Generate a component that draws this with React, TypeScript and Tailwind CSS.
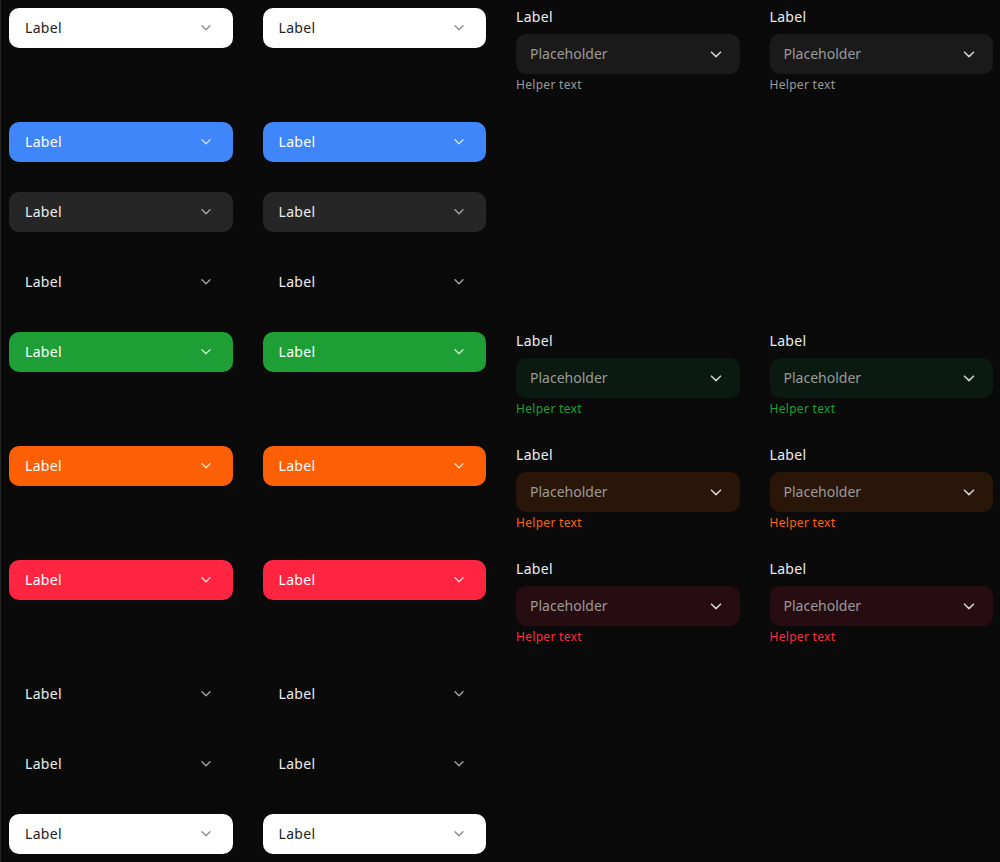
import React from "react";

type BtnVariant = "white" | "blue" | "gray" | "ghost" | "green" | "orange" | "red";
type FieldVariant = "default" | "green" | "orange" | "red";

const btnStyles: Record<BtnVariant, { box: string; text: string; icon: string }> = {
  white: { box: "bg-white", text: "text-[#222222]", icon: "#8a8a8a" },
  blue: { box: "bg-[#4086fb]", text: "text-white", icon: "#d2e2ff" },
  gray: { box: "bg-[#262626]", text: "text-[#ededed]", icon: "#a8a8a8" },
  ghost: { box: "bg-transparent", text: "text-[#ededed]", icon: "#a8a8a8" },
  green: { box: "bg-[#1d9f35]", text: "text-white", icon: "#cfeed5" },
  orange: { box: "bg-[#fc5f06]", text: "text-white", icon: "#ffe0cc" },
  red: { box: "bg-[#ff2540]", text: "text-white", icon: "#ffd6dc" },
};

const fieldStyles: Record<FieldVariant, { box: string; helper: string }> = {
  default: { box: "bg-[#1a1a1a]", helper: "text-[#9a9a9a]" },
  green: { box: "bg-[#0b1a10]", helper: "text-[#1f9f36]" },
  orange: { box: "bg-[#2a1509]", helper: "text-[#ff6207]" },
  red: { box: "bg-[#270d11]", helper: "text-[#ff2a42]" },
};

function SmallChevron({ color }: { color: string }) {
  return (
    <svg width="10" height="6" viewBox="0 0 10 6" fill="none">
      <polyline points="1,0.8 5,4.8 9,0.8" stroke={color} strokeWidth="1.3" strokeLinecap="round" strokeLinejoin="round" />
    </svg>
  );
}

function FieldChevron() {
  return (
    <svg width="12" height="7" viewBox="0 0 12 7" fill="none">
      <polyline points="1.5,1.2 6,5.6 10.5,1.2" stroke="#cfcfcf" strokeWidth="1.6" strokeLinecap="round" strokeLinejoin="round" />
    </svg>
  );
}

function SelectButton({ v }: { v: BtnVariant }) {
  const s = btnStyles[v];
  return (
    <div className={`h-10 rounded-[10px] flex items-center justify-between pl-4 pr-[22px] ${s.box}`}>
      <span className={`text-sm tracking-[0.3px] ${s.text}`}>Label</span>
      <SmallChevron color={s.icon} />
    </div>
  );
}

function Field({ v }: { v: FieldVariant }) {
  const s = fieldStyles[v];
  return (
    <div className="flex flex-col">
      <span className="text-sm leading-[18px] tracking-[0.3px] text-[#ededed]">Label</span>
      <div className={`mt-2 h-10 rounded-[10px] flex items-center justify-between pl-[14px] pr-[18px] ${s.box}`}>
        <span className="text-sm text-[#9a9a9a]">Placeholder</span>
        <FieldChevron />
      </div>
      <span className={`mt-1 text-[12px] leading-[14px] tracking-[0.3px] ${s.helper}`}>Helper text</span>
    </div>
  );
}

const rows: { b: BtnVariant; f?: FieldVariant }[] = [
  { b: "white", f: "default" },
  { b: "blue" },
  { b: "gray" },
  { b: "ghost" },
  { b: "green", f: "green" },
  { b: "orange", f: "orange" },
  { b: "red", f: "red" },
  { b: "ghost" },
  { b: "ghost" },
  { b: "white" },
];

export default function App() {
  return (
    <div
      className="min-h-[862px] bg-[#0a0a0a] border-l border-[#262626] pl-2 pr-[7px] pt-2 pb-2 grid grid-cols-4 gap-x-[30px] gap-y-[30px] content-start items-start"
      style={{ fontFamily: '"Noto Sans", "Open Sans", sans-serif' }}
    >
      {rows.map((r, i) => (
        <React.Fragment key={i}>
          <SelectButton v={r.b} />
          <SelectButton v={r.b} />
          {r.f ? <Field v={r.f} /> : <div />}
          {r.f ? <Field v={r.f} /> : <div />}
        </React.Fragment>
      ))}
    </div>
  );
}
